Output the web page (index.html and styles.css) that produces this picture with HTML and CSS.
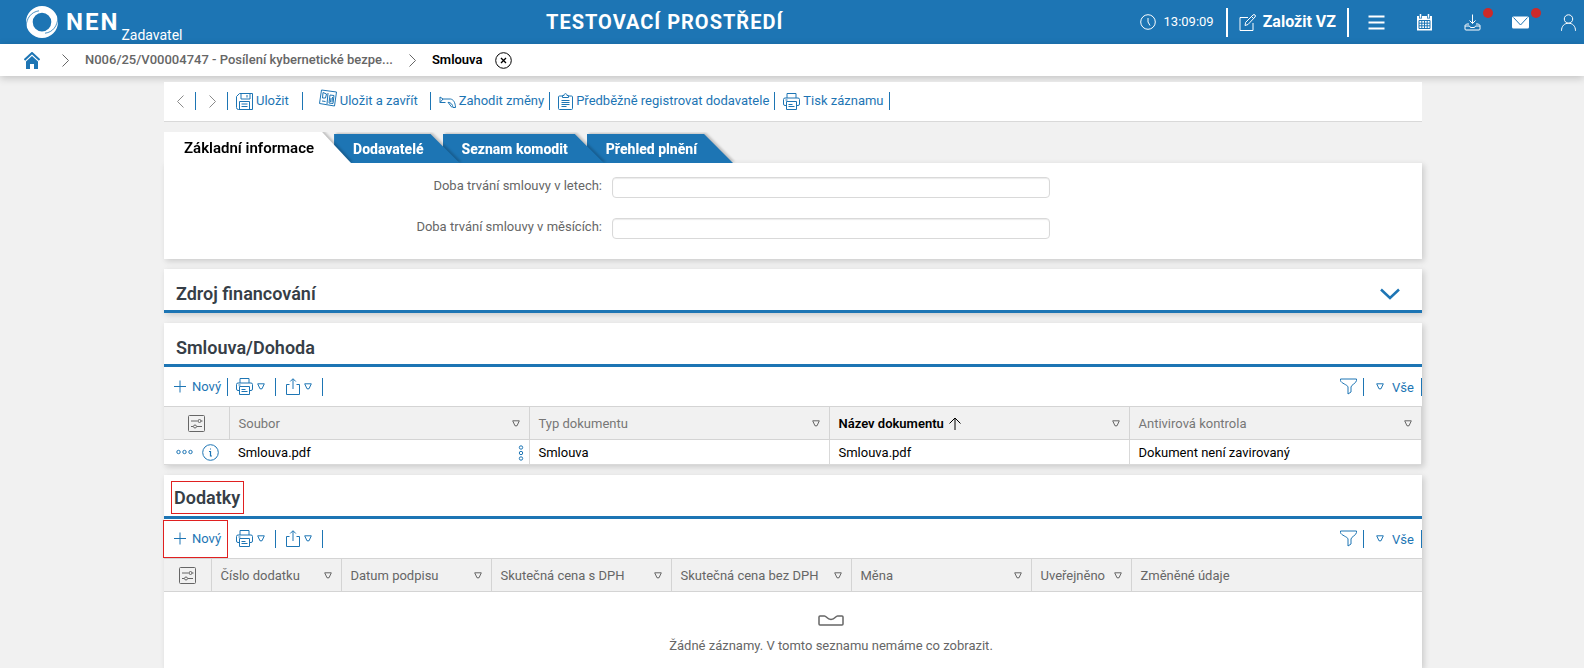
FILE: index.html
```html
<!DOCTYPE html>
<html lang="cs">
<head>
    <meta charset="UTF-8">
    <title>NEN - Smlouva</title>
    <link rel="stylesheet" href="styles.css">
</head>
<body>
    <svg class="sprite" aria-hidden="true">
        <symbol id="print" viewBox="0 0 17 17">
            <path d="M4 5V.5h9V5M3.500 12.500H2a1.500 1.500 0 0 1-1.500-1.500V6.500A1.500 1.500 0 0 1 2 5h13a1.500 1.500 0 0 1 1.500 1.500V11a1.500 1.500 0 0 1-1.500 1.500h-1.500M3.500 8.500h10v8h-10zM5.500 11.500h4M5.500 13.500h6M2.500 7h2"/>
        </symbol>
        <symbol id="tri" viewBox="0 0 8 7">
            <path d="M.7.800h6.600L5 5.800H3z"/>
        </symbol>
        <symbol id="share" viewBox="0 0 14 17">
            <path d="M3.500 6.500h-3v10h13v-10h-3M7 11V1M4.200 3.500L7 .700l2.800 2.800"/>
        </symbol>
        <symbol id="filter" viewBox="0 0 17 17">
            <path d="M.5 1h16v1.500c0 2.500-5.500 4.500-5.500 6.500v5l-3 2V9C8 7 .5 5 .5 2.500z"/>
        </symbol>
        <symbol id="setup" viewBox="0 0 17 17">
            <path d="M1.500.5h14a1 1 0 0 1 1 1v14a1 1 0 0 1-1 1h-14a1 1 0 0 1-1-1v-14a1 1 0 0 1 1-1zM3 6h6.500M13 6h1.500M3 11.500h2M9 11.500h5M10 6a1.500 1.500 0 1 0 3 0a1.500 1.500 0 1 0-3 0M5.500 11.500a1.500 1.500 0 1 0 3 0a1.500 1.500 0 1 0-3 0"/>
        </symbol>
        <symbol id="plus" viewBox="0 0 12 13">
            <path d="M6 .5v12M0 6.500h12"/>
        </symbol>
        <symbol id="next" viewBox="0 0 7 13">
            <path d="M.5.5l6 6-6 6"/>
        </symbol>
        <symbol id="prev" viewBox="0 0 7 13">
            <path d="M6.500.5l-6 6 6 6"/>
        </symbol>
    </svg>

    <header class="header">
        <a href="#" class="logo">
            <svg width="32" height="32" viewBox="0 0 32 32">
                <path fill="#fff" fill-rule="evenodd" d="M16 0a16 16 0 1 1 0 32a16 16 0 1 1 0-32zM16 6.800a9.300 9.300 0 1 0 0 18.600a9.300 9.300 0 1 0 0-18.600z"/>
                <path d="M0 21C.5 12 5 6 13 4.800M32 11C31.500 20 27 26.200 19 27.200" fill="none" stroke="#1d75b4" stroke-width=".8"/>
            </svg>
            <span class="logo-name">NEN</span>
            <span class="logo-role">Zadavatel</span>
        </a>
        <div class="env">TESTOVACÍ PROSTŘEDÍ</div>
        <div class="header-right">
            <span class="clock">
                <svg width="16" height="16" viewBox="0 0 16 16"><circle cx="8" cy="8" r="7.300"/><path d="M8 4v4l2 3.500"/></svg>
                13:09:09
            </span>
            <button class="create">
                <svg width="17" height="17" viewBox="0 0 17 17"><path d="M9 3.500H1v13h13V9M6 11.500l.7-3.200L14 1a1.300 1.300 0 0 1 2 2L9 10.500zM12.500 2.500l2 2"/></svg>
                Založit VZ
            </button>
            <nav class="header-icons">
                <button aria-label="Menu"><svg width="17" height="17" viewBox="0 0 17 17"><path d="M.5 2.500h16M.5 8.500h16M.5 14.500h16" stroke-width="2"/></svg></button>
                <button aria-label="Kalendář"><svg width="17" height="17" viewBox="0 0 17 17"><path d="M1 2h15v14.500H1z" fill="#fff" stroke="none"/><path d="M4.500 0v4.500M12.500 0v4.500" stroke="#1d75b4" stroke-width="3"/><path d="M4.500 0v3.800M12.500 0v3.800" stroke-width="1.500"/><path d="M3 6.500h11v8H3zM3 9.200h11M3 11.800h11M5.800 6.500v8M8.500 6.500v8M11.200 6.500v8" stroke="#1d75b4"/></svg></button>
                <button aria-label="Stažené"><svg width="17" height="17" viewBox="0 0 17 17"><path d="M8.500.5v9M5.500 6.500l3 3 3-3M5 10H2.500L1 11.500V15a1 1 0 0 0 1 1h13a1 1 0 0 0 1-1v-3.500L14.500 10H12M1 12h4.500l1 1.500h4l1-1.500H16"/></svg><i class="dot"></i></button>
                <button aria-label="Zprávy"><svg width="17" height="17" viewBox="0 0 17 17"><rect x="0" y="2.500" width="17" height="12" rx="1.500" fill="#fff" stroke="none"/><path d="M1.500 3.500l7 7.500 7-7.500" stroke="#1d75b4"/></svg><i class="dot"></i></button>
                <button aria-label="Uživatel"><svg width="17" height="17" viewBox="0 0 17 17"><circle cx="8.500" cy="5" r="4.200"/><path d="M1.500 16.800c0-4.800 3-7.600 7-7.600s7 2.800 7 7.600"/></svg></button>
            </nav>
        </div>
    </header>

    <nav class="crumbs">
        <a href="#" aria-label="Domů"><svg width="16" height="17" viewBox="0 0 16 17"><path d="M.500 8L8 1l7.500 7" fill="none" stroke="#1d75b4" stroke-width="2"/><path d="M2 9.500L8 4l6 5.500V17h-4v-5H6v5H2z" fill="#1d75b4"/></svg></a>
        <svg class="arrow" width="7" height="13"><use href="#next"/></svg>
        <a href="#">N006/25/V00004747 - Posílení kybernetické bezpe...</a>
        <svg class="arrow" width="7" height="13"><use href="#next"/></svg>
        <span class="current">Smlouva</span>
        <button class="close" aria-label="Zavřít"><svg width="17" height="17" viewBox="0 0 17 17"><circle cx="8.500" cy="8.500" r="7.800"/><path d="M6 6l5 5M11 6l-5 5" stroke-width="1.300"/></svg></button>
    </nav>

    <main class="main">
        <div class="bar actions">
            <button class="step" aria-label="Předchozí"><svg width="7" height="13"><use href="#prev"/></svg></button>
            <button class="step" aria-label="Další"><svg width="7" height="13"><use href="#next"/></svg></button>
            <button class="save"><svg width="17" height="17" viewBox="0 0 17 17"><path d="M3.500.5h13v16h-14a2 2 0 0 1-2-2v-11zM5 .5v5.500h9V.5M11 2v2.500M3.500 16.500v-8h10v8M5.500 11h6M5.500 13.500h6"/></svg>Uložit</button>
            <button class="save-close"><svg class="raised" width="18" height="18" viewBox="0 0 18 18"><path d="M2.500 1l15 2-2 14L.500 14.500zM4 3.500L3.500 9h3l1-4zM9 4L8 15M11 6l4 .5-1 8-4-.5zM12 9l-.5 4M13.500 8l-.5 5M3 12l3.500.5"/></svg>Uložit a zavřít</button>
            <button><svg width="17" height="17" viewBox="0 0 17 17"><path d="M1 4v5.500h5.500M1 9.500L4 6h7.500c3 .5 4.800 3.500 5 8.500h-2.500c-.3-3-2-5-5-5.200l4 5.200M1 4l3 2"/></svg>Zahodit změny</button>
            <button><svg width="15" height="17" viewBox="0 0 15 17"><path d="M4.500 3h-3a1 1 0 0 0-1 1v11.500a1 1 0 0 0 1 1h12a1 1 0 0 0 1-1V4a1 1 0 0 0-1-1h-3M4.500 4.500v-2H6c0-2.500 3-2.500 3 0h1.500v2zM3.500 7.500h8M3.500 9.500h8M3.500 11.500h8M3.500 13.500h5"/></svg>Předběžně registrovat dodavatele</button>
            <button><svg width="17" height="17"><use href="#print"/></svg>Tisk záznamu</button>
        </div>

        <div class="tabs">
            <button class="tab active"><span>Základní informace</span></button>
            <button class="tab"><span>Dodavatelé</span></button>
            <button class="tab"><span>Seznam komodit</span></button>
            <button class="tab"><span>Přehled plnění</span></button>
        </div>
        <form class="panel form">
            <label for="years">Doba trvání smlouvy v letech:</label>
            <input id="years" type="text">
            <label for="months">Doba trvání smlouvy v měsících:</label>
            <input id="months" type="text">
        </form>

        <section class="panel">
            <div class="head">
                <h2>Zdroj financování</h2>
                <button class="expand" aria-label="Rozbalit"><svg width="20" height="12" viewBox="0 0 20 12"><path d="M1 1.500l9 8.500 9-8.500" stroke-width="2.500"/></svg></button>
            </div>
        </section>

        <section class="panel">
            <div class="head"><h2>Smlouva/Dohoda</h2></div>
            <div class="bar">
                <button class="new"><svg width="12" height="13"><use href="#plus"/></svg>Nový</button>
                <button class="menu" aria-label="Tisk"><svg width="17" height="17"><use href="#print"/></svg><svg width="8" height="7"><use href="#tri"/></svg></button>
                <button class="menu share" aria-label="Export"><svg width="14" height="17"><use href="#share"/></svg><svg width="8" height="7"><use href="#tri"/></svg></button>
                <button class="filter" aria-label="Filtr"><svg width="17" height="17"><use href="#filter"/></svg></button>
                <label class="view"><svg width="8" height="7"><use href="#tri"/></svg><select aria-label="Pohled"><option>Vše</option></select></label>
            </div>
            <table class="grid">
                <colgroup><col class="w65"><col class="w300"><col class="w300"><col class="w300"><col></colgroup>
                <thead>
                    <tr>
                        <th class="center"><svg width="17" height="17"><use href="#setup"/></svg></th>
                        <th><div class="th">Soubor<svg width="8" height="7"><use href="#tri"/></svg></div></th>
                        <th><div class="th">Typ dokumentu<svg width="8" height="7"><use href="#tri"/></svg></div></th>
                        <th class="sorted"><div class="th"><span>Název dokumentu <svg width="12" height="13" viewBox="0 0 12 13"><path d="M6 13V1M.500 6.500L6 1l5.500 5.500"/></svg></span><svg width="8" height="7"><use href="#tri"/></svg></div></th>
                        <th><div class="th">Antivirová kontrola<svg width="8" height="7"><use href="#tri"/></svg></div></th>
                    </tr>
                </thead>
                <tbody>
                    <tr>
                        <td class="row-tools">
                            <div class="tools">
                                <svg width="17" height="6" viewBox="0 0 17 6"><circle cx="2.500" cy="3" r="1.700"/><circle cx="8.500" cy="3" r="1.700"/><circle cx="14.500" cy="3" r="1.700"/></svg>
                                <svg width="17" height="17" viewBox="0 0 17 17"><circle cx="8.500" cy="8.500" r="7.800"/><path d="M7 7.500h1.500V12H10M8 5h1" stroke-width="1.200"/></svg>
                            </div>
                        </td>
                        <td><div class="th file">Smlouva.pdf<svg width="6" height="16" viewBox="0 0 6 16"><circle cx="3" cy="2.500" r="1.700"/><circle cx="3" cy="8" r="1.700"/><circle cx="3" cy="13.500" r="1.700"/></svg></div></td>
                        <td>Smlouva</td>
                        <td>Smlouva.pdf</td>
                        <td>Dokument není zavirovaný</td>
                    </tr>
                </tbody>
            </table>
        </section>

        <section class="panel grow">
            <div class="head marked"><h2>Dodatky</h2></div>
            <div class="bar marked">
                <button class="new"><svg width="12" height="13"><use href="#plus"/></svg>Nový</button>
                <button class="menu" aria-label="Tisk"><svg width="17" height="17"><use href="#print"/></svg><svg width="8" height="7"><use href="#tri"/></svg></button>
                <button class="menu share" aria-label="Export"><svg width="14" height="17"><use href="#share"/></svg><svg width="8" height="7"><use href="#tri"/></svg></button>
                <button class="filter" aria-label="Filtr"><svg width="17" height="17"><use href="#filter"/></svg></button>
                <label class="view"><svg width="8" height="7"><use href="#tri"/></svg><select aria-label="Pohled"><option>Vše</option></select></label>
            </div>
            <table class="grid dark">
                <colgroup><col class="w47"><col class="w130"><col class="w150"><col class="w180"><col class="w180"><col class="w180"><col class="w100"><col></colgroup>
                <thead>
                    <tr>
                        <th class="center"><svg width="17" height="17"><use href="#setup"/></svg></th>
                        <th><div class="th">Číslo dodatku<svg width="8" height="7"><use href="#tri"/></svg></div></th>
                        <th><div class="th">Datum podpisu<svg width="8" height="7"><use href="#tri"/></svg></div></th>
                        <th><div class="th">Skutečná cena s DPH<svg width="8" height="7"><use href="#tri"/></svg></div></th>
                        <th><div class="th">Skutečná cena bez DPH<svg width="8" height="7"><use href="#tri"/></svg></div></th>
                        <th><div class="th">Měna<svg width="8" height="7"><use href="#tri"/></svg></div></th>
                        <th><div class="th">Uveřejněno<svg width="8" height="7"><use href="#tri"/></svg></div></th>
                        <th class="end"><div class="th">Změněné údaje</div></th>
                    </tr>
                </thead>
            </table>
            <div class="empty">
                <svg width="26" height="11" viewBox="0 0 26 11"><path d="M2 1h4.500c2 0 2.500 3.500 6.500 3.500S17.500 1 19.500 1H24a1 1 0 0 1 1 1v7a1 1 0 0 1-1 1H2a1 1 0 0 1-1-1V2a1 1 0 0 1 1-1z" stroke-width="1.500"/></svg>
                <p>Žádné záznamy. V tomto seznamu nemáme co zobrazit.</p>
            </div>
        </section>
    </main>
</body>
</html>
```
FILE: styles.css
```css
* {
    box-sizing: border-box;
    margin: 0;
    padding: 0;
}

body {
    display: flex;
    flex-direction: column;
    min-height: 100vh;
    background: #f1f1f1;
    color: #666;
    font: 13px/16px Roboto, "Liberation Sans", sans-serif;
}

a {
    color: inherit;
    text-decoration: none;
}

button, select, input {
    border: 0;
    background: none;
    color: inherit;
    font: inherit;
}

button {
    display: flex;
    align-items: center;
    cursor: pointer;
}

svg {
    flex: none;
    fill: none;
    stroke: currentColor;
}

.sprite {
    position: absolute;
    width: 0;
    height: 0;
}

/* header */
.header {
    display: grid;
    grid-template-columns: 520px auto 1fr;
    align-items: center;
    height: 44px;
    padding: 0 7px 0 26px;
    background: #1d75b4;
    color: #fff;
}

.logo {
    display: flex;
    align-items: center;
}

.logo svg {
    stroke: none;
}

.logo-name {
    margin-left: 8px;
    font-size: 24px;
    font-weight: 700;
    line-height: 32px;
    letter-spacing: 2px;
}

.logo-role {
    align-self: flex-end;
    margin-left: 2px;
    font-size: 14px;
    line-height: 6px;
}

.env {
    font-size: 20px;
    font-weight: 700;
    line-height: 24px;
    letter-spacing: 1px;
}

.header-right {
    display: flex;
    justify-content: flex-end;
    align-items: center;
}

.clock {
    display: flex;
    align-items: center;
    gap: 8px;
    padding-right: 12px;
}

.create {
    gap: 7px;
    height: 29px;
    padding: 0 11px;
    border: solid #fff;
    border-width: 0 2px;
    font-size: 16px;
    font-weight: 700;
}

.header-icons {
    display: flex;
    gap: 31px;
    margin-left: 19px;
}

.header-icons button {
    position: relative;
}

.dot {
    position: absolute;
    top: -6px;
    right: -12px;
    width: 10px;
    height: 10px;
    border-radius: 50%;
    background: #cc2a2a;
}

/* breadcrumbs */
.crumbs {
    display: flex;
    align-items: center;
    height: 32px;
    padding-left: 24px;
    background: #fff;
    font-weight: 500;
    box-shadow: 0 2px 8px rgba(0, 0, 0, .2);
}

.crumbs svg {
    display: block;
}

.arrow {
    margin: 0 16px;
}

.crumbs a:first-child svg {
    stroke: none;
}

.crumbs a:first-child {
    margin-right: 6px;
}

.current {
    color: #000;
    font-weight: 600;
}

.close {
    margin-left: 12px;
    color: #000;
}

/* content */
.main {
    display: flex;
    flex: 1;
    flex-direction: column;
    margin: 6px 162px 0 164px;
}

.panel {
    margin-bottom: 10px;
    background: #fff;
    box-shadow: 2px 2px 6px rgba(0, 0, 0, .16);
}

.grow {
    flex: 1;
    margin-bottom: 0;
}

.bar {
    display: flex;
    align-items: center;
    height: 39px;
    background: #fff;
    color: #1d75b4;
}

.bar button {
    gap: 4px;
    height: 18px;
    padding: 0 7px 0 8px;
    border-right: 1px solid #1d75b4;
}

.actions {
    height: 40px;
    padding-bottom: 1px;
    border-bottom: 1px solid #d9d9d9;
}

.actions button {
    gap: 3px;
    padding: 0 5px 0 8px;
}

.actions .step {
    padding: 0 11px 0 13px;
}

.step svg {
    color: #8a8a8a;
}

.actions .save {
    padding-right: 13px;
}

.actions .save-close {
    padding: 0 12px 0 16px;
}

.raised {
    margin-bottom: 6px;
}

/* tabs */
.tabs {
    display: flex;
    align-items: flex-end;
    height: 31px;
    margin-top: 10px;
    overflow: hidden;
}

.tab {
    position: relative;
    height: 29px;
    padding: 0 19px;
    color: #fff;
    font-size: 14px;
    font-weight: 800;
    filter: drop-shadow(2px -1px 1px rgba(0, 0, 0, .2));
}

.tab::before {
    content: "";
    position: absolute;
    inset: 0 -17px 0 0;
    background: #1d75b4;
    clip-path: polygon(0 0, calc(100% - 29px) 0, 100% 100%, 0 100%);
}

.tab span {
    position: relative;
}

.tab:nth-child(1) { z-index: 4; }
.tab:nth-child(2) { z-index: 3; }
.tab:nth-child(3) { z-index: 2; }
.tab:nth-child(4) { z-index: 1; }

.tab.active {
    height: 31px;
    padding: 0 20px;
    color: #000;
    font-size: 15px;
    font-weight: 600;
}

.tab.active::before {
    background: #fff;
}

/* form */
.form {
    display: grid;
    grid-template-columns: 438fr 438fr 362fr;
    gap: 20px 10px;
    padding: 14px 0 20px;
}

.form label {
    grid-column: 1;
    padding-top: 1px;
    text-align: right;
}

.form input {
    height: 21px;
    padding: 0 6px;
    border: 1px solid #d9d9d9;
    border-radius: 4px;
    box-shadow: inset 0 1px 1px rgba(0, 0, 0, .08);
}

/* sections */
.head {
    display: flex;
    justify-content: space-between;
    align-items: flex-end;
    height: 44px;
    padding: 0 22px 2px 12px;
    border-bottom: 3px solid #1d75b4;
}

h2 {
    color: #363e47;
    font-size: 18px;
    font-weight: 600;
    line-height: 28px;
}

.expand {
    height: 28px;
    color: #1d75b4;
}

.head.marked {
    padding-left: 7px;
}

.marked h2 {
    padding: 0 3px 0 2px;
    border: 1px solid #e02020;
    line-height: 31px;
}

.bar .new {
    gap: 6px;
    padding: 0 6px 0 10px;
}

.bar.marked .new {
    height: 38px;
    margin-left: -1px;
    border: 1px solid #e02020;
}

.bar .menu {
    padding: 0 10px 0 8px;
}

.bar .share {
    padding-left: 10px;
}

.bar .filter {
    margin-left: auto;
    padding: 0 6px 0 0;
}

.view {
    display: flex;
    align-items: center;
    gap: 8px;
    height: 18px;
    padding: 0 7px 0 12px;
    border-right: 1px solid #1d75b4;
}

.view select {
    padding-top: 2px;
    appearance: none;
}

/* tables */
.grid {
    width: 100%;
    border-collapse: collapse;
    table-layout: fixed;
    color: #000;
}

.w47 { width: 47px; }
.w65 { width: 65px; }
.w100 { width: 100px; }
.w130 { width: 130px; }
.w150 { width: 150px; }
.w180 { width: 180px; }
.w300 { width: 300px; }

.grid th {
    height: 33px;
    padding: 1px 9px 0 9px;
    border: solid #d4d4d4;
    border-width: 1px 1px 1px 0;
    background: #f1f1f1;
    color: #777;
    font-weight: 400;
    text-align: left;
}

.dark th {
    color: #666;
}

.grid .center {
    padding: 0;
    text-align: center;
}

.grid th.center svg {
    display: block;
    margin: 0 auto;
    color: #666;
}

.grid .end {
    border-right: 0;
}

.grid .sorted {
    color: #000;
    font-weight: 600;
}

.sorted span svg {
    margin-left: 2px;
    vertical-align: -2px;
}

.th {
    display: flex;
    justify-content: space-between;
    align-items: center;
}

.th > svg {
    color: #666;
}

.grid td {
    height: 25px;
    padding: 1px 5px 0 9px;
    border: solid #d9d9d9;
    border-width: 0 1px 1px 0;
}

.grid .row-tools {
    padding: 0 0 0 12px;
    border-right: 0;
}

.tools {
    display: flex;
    align-items: center;
    gap: 9px;
    color: #1d75b4;
}

.file > svg {
    color: #1d75b4;
}

.empty {
    display: flex;
    flex-direction: column;
    align-items: center;
    gap: 12px;
    padding: 23px 0 0 76px;
}
```
